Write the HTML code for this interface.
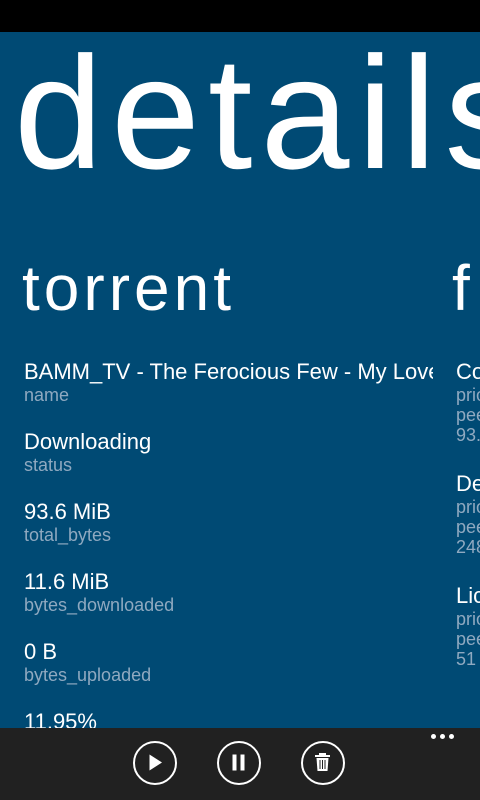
<!DOCTYPE html>
<html><head><meta charset="utf-8"><style>
html,body{margin:0;width:480px;height:800px;overflow:hidden}
body{background:#004a74;font-family:"Liberation Sans",sans-serif;color:#fff;position:relative}
.top{position:absolute;left:0;top:0;width:480px;height:32px;background:#000}
.t{position:absolute;white-space:nowrap}
.v{font-size:22px}
.l{font-size:18px;color:#8fa9c0}
.bar{position:absolute;left:0;top:728px;width:480px;height:72px;background:#212121}
.c{position:absolute;top:741px;width:44px;height:44px;border:2.5px solid #fff;border-radius:50%;box-sizing:border-box}
</style></head><body>
<div class="top"></div>
<div style="position:absolute;left:0;top:0;width:480px;height:728px;overflow:hidden">
<div class="t" style="left:14px;top:3px;font-size:160px;line-height:220px;letter-spacing:8px">details</div>
<div class="t" style="left:22px;top:250px;font-size:64px;line-height:76px;letter-spacing:4px">torrent</div>
<div class="t" style="left:452px;top:250px;font-size:64px;line-height:76px">f</div>
</div>
<div style="position:absolute;left:24px;top:0;width:409px;height:728px;overflow:hidden">
<div class="t v" style="left:0;top:359px">BAMM_TV - The Ferocious Few - My Love</div>
<div class="t l" style="left:0;top:385px">name</div>
<div class="t v" style="left:0;top:429px">Downloading</div>
<div class="t l" style="left:0;top:455px">status</div>
<div class="t v" style="left:0;top:499px">93.6 MiB</div>
<div class="t l" style="left:0;top:525px">total_bytes</div>
<div class="t v" style="left:0;top:569px">11.6 MiB</div>
<div class="t l" style="left:0;top:595px">bytes_downloaded</div>
<div class="t v" style="left:0;top:639px">0 B</div>
<div class="t l" style="left:0;top:665px">bytes_uploaded</div>
<div class="t v" style="left:0;top:709px">11.95%</div>
</div>
<div style="position:absolute;left:456px;top:0;width:24px;height:728px;overflow:hidden">
<div class="t v" style="left:0;top:359px">Complete</div>
<div class="t l" style="left:0;top:385px">priority</div>
<div class="t l" style="left:0;top:405px">peers</div>
<div class="t l" style="left:0;top:425px">93.6</div>
<div class="t v" style="left:0;top:471px">Desc</div>
<div class="t l" style="left:0;top:497px">priority</div>
<div class="t l" style="left:0;top:517px">peers</div>
<div class="t l" style="left:0;top:537px">248</div>
<div class="t v" style="left:0;top:583px">License</div>
<div class="t l" style="left:0;top:609px">priority</div>
<div class="t l" style="left:0;top:629px">peers</div>
<div class="t l" style="left:0;top:649px">51</div>
</div>
<div class="bar"></div>
<div class="c" style="left:133px"><svg width="40" height="40" style="position:absolute;left:0;top:0"><path d="M14.5 11.5L27 19.5L14.5 27.5Z" fill="#fff"/></svg></div>
<div class="c" style="left:217px"><svg width="40" height="40" style="position:absolute;left:0;top:0"><rect x="13.5" y="11.5" width="4" height="16" fill="#fff"/><rect x="21.5" y="11.5" width="4" height="16" fill="#fff"/></svg></div>
<div class="c" style="left:301px"><svg width="40" height="40" style="position:absolute;left:0;top:0"><rect x="16" y="10" width="7" height="2" fill="#fff"/><rect x="12" y="12" width="15" height="2" fill="#fff"/><path d="M13.5 15h12l-1 13h-10z" fill="#fff"/><path d="M17 17v9M19.5 17v9M22 17v9" stroke="#212121" stroke-width="1"/></svg></div>
<div class="t" style="left:431px;top:734px;font-size:0">
<span style="display:inline-block;width:5px;height:5px;border-radius:50%;background:#fff;margin-right:4px"></span><span style="display:inline-block;width:5px;height:5px;border-radius:50%;background:#fff;margin-right:4px"></span><span style="display:inline-block;width:5px;height:5px;border-radius:50%;background:#fff"></span></div>
</body></html>
